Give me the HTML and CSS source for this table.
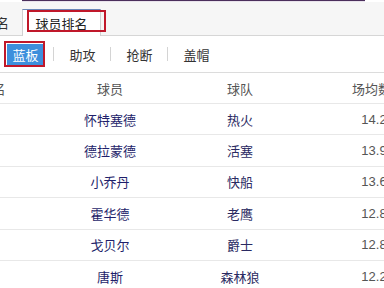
FILE: index.html
```html
<!DOCTYPE html>
<html>
<head>
<meta charset="utf-8">
<link rel="stylesheet" href="styles.css">
</head>
<body>
<div class="page">
  <div class="topline"></div>
  <div class="tabbar">
    <div class="tab">排名</div>
    <div class="tab active">球员排名<span class="mark mark-tab"></span></div>
  </div>
  <div class="subtabs">
    <div class="item"><span class="pill on">蓝板</span><span class="mark mark-pill"></span></div>
    <div class="item"><span class="pill">助攻</span></div>
    <div class="item"><span class="pill">抢断</span></div>
    <div class="item last"><span class="pill">盖帽</span></div>
  </div>
  <div class="table">
    <div class="row head"><div>排名</div><div>球员</div><div>球队</div><div>场均数据</div></div>
    <div class="row"><div>1</div><div class="link">怀特塞德</div><div class="team">热火</div><div class="num">14.2</div></div>
    <div class="row"><div>2</div><div class="link">德拉蒙德</div><div class="team">活塞</div><div class="num">13.9</div></div>
    <div class="row"><div>3</div><div class="link">小乔丹</div><div class="team">快船</div><div class="num">13.6</div></div>
    <div class="row"><div>4</div><div class="link">霍华德</div><div class="team">老鹰</div><div class="num">12.8</div></div>
    <div class="row"><div>5</div><div class="link">戈贝尔</div><div class="team">爵士</div><div class="num">12.8</div></div>
    <div class="row"><div>6</div><div class="link">唐斯</div><div class="team">森林狼</div><div class="num">12.2</div></div>
  </div>
</div>
</body>
</html>
```
FILE: styles.css
```css
* { box-sizing: border-box; }
html, body { margin: 0; padding: 0; background: #fff; }
body {
  width: 384px;
  height: 288px;
  overflow: hidden;
  font-family: "Noto Sans CJK SC", "Liberation Sans", sans-serif;
  font-size: 13px;
  color: #333;
}
.page { position: relative; width: 384px; }
.topline {
  height: 2px;
  margin-left: 22px;
  width: 343px;
  border-top: 1px solid #4b2f5c;
  background: #e9e3ec;
}
.tabbar {
  height: 34px;
  background: #f6f6f6;
  border-bottom: 1px solid #d6d6d6;
  display: flex;
  align-items: flex-end;
}
.tab {
  height: 26px;
  line-height: 24px;
  padding: 2px 13px 0;
  color: #333;
  flex: none;
}
.tab:first-child { margin-left: -30px; width: 52px; }
.tab.active {
  position: relative;
  width: 79px;
  padding: 2px 0 0;
  text-align: center;
  background: #fff;
  border: 1px solid #d0d0d0;
  border-top: 1px solid #6a86b8;
  border-bottom: none;
  margin-bottom: -1px;
  height: 27px;
  color: #222;
}
.mark {
  position: absolute;
  border: 2px solid #c0182a;
}
.mark-tab { left: 4px; top: 0; width: 79px; height: 22px; }
.subtabs {
  height: 37px;
  border-bottom: 1px solid #dcdcdc;
  display: flex;
  align-items: center;
  margin-left: -3px;
}
.item {
  position: relative;
  width: 57px;
  display: flex;
  justify-content: center;
  align-items: center;
}
.item::after {
  content: "";
  position: absolute;
  right: 0;
  top: 50%;
  width: 1px;
  height: 14px;
  margin-top: -7px;
  background: #d4d4d4;
}
.item.last::after { display: none; }
.pill {
  display: block;
  height: 21px;
  line-height: 21px;
  padding: 0 5px;
  color: #333;
}
.pill.on { background: #3d8fdc; color: #fff; }
.mark-pill { left: 7px; top: -3px; width: 41px; height: 26px; }
.table { margin-left: -60px; }
.row {
  display: grid;
  grid-template-columns: 105px 130px 130px 146px;
  height: 31.4px;
  border-bottom: 1px solid #e8e8e8;
  align-items: center;
  text-align: center;
  color: #444;
}
.row.head { height: 31px; color: #555; }
.link { color: #1f1f6b; }
.team { color: #2a2a62; }
.num { color: #555; font-family: "Liberation Sans", sans-serif; font-size: 13px; padding-right: 8px; }
```
